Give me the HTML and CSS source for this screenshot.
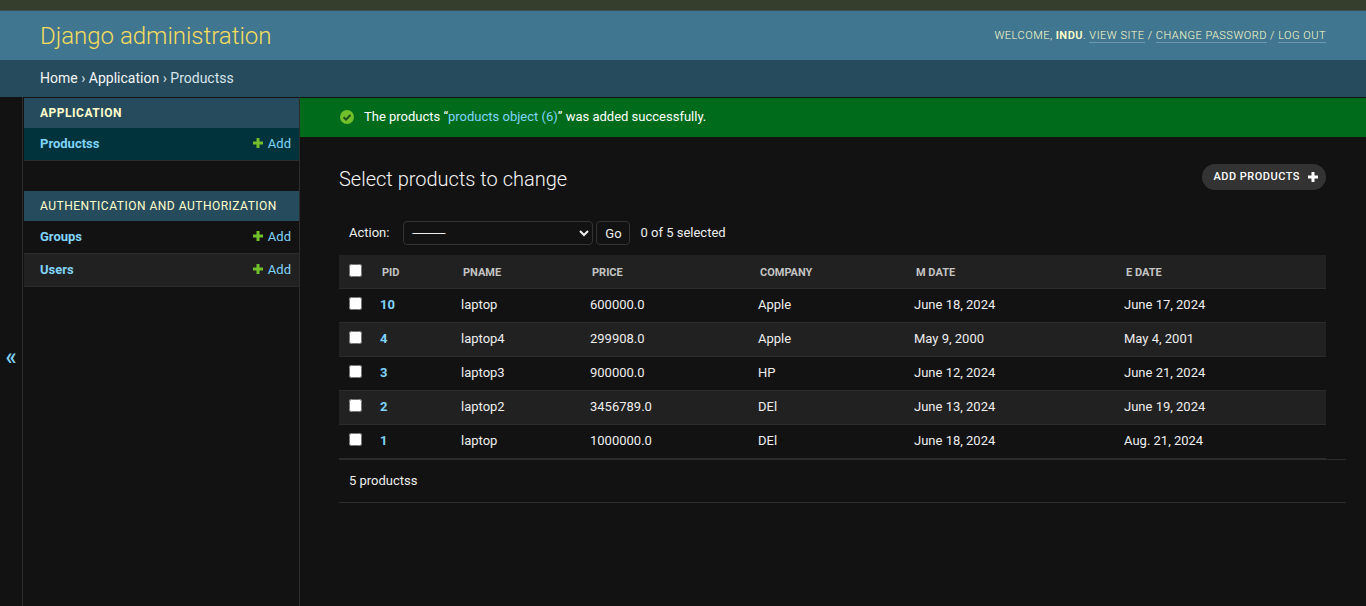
FILE: index.html
```html
<!DOCTYPE html>
<html>
<head>
	<title>Select products to change | Django site admin</title>
	<meta charset=utf-8>
	<link rel="stylesheet" href="styles.css">
</head>
<body>
	<div class="topband"></div>
	<header class="header">
		<div class="branding">Django administration</div>
		<div class="user-tools">
			Welcome, <strong>Indu</strong>. <a href="#">View site</a> / <a href="#">Change password</a> / <a href="#">Log out</a>
		</div>
	</header>
	<div class="breadcrumbs"><a href="#">Home</a> › <a href="#">Application</a> › Productss</div>

	<div class="main">
		<div class="toggle"><span class="toggle-mark">«</span></div>
		<nav class="sidebar">
			<div class="app">
				<div class="app-title">Application</div>
				<div class="model current">
					<a href="#" class="model-name">Productss</a>
					<a href="#" class="addlink"><svg width="12" height="12" viewBox="0 0 12 12"><path d="M4.5 1h3v3.5H11v3H7.5V11h-3V7.5H1v-3h3.5z" fill="#70bf2b"/></svg>Add</a>
				</div>
			</div>
			<div class="app">
				<div class="app-title normal">Authentication and Authorization</div>
				<div class="model">
					<a href="#" class="model-name">Groups</a>
					<a href="#" class="addlink"><svg width="12" height="12" viewBox="0 0 12 12"><path d="M4.5 1h3v3.5H11v3H7.5V11h-3V7.5H1v-3h3.5z" fill="#70bf2b"/></svg>Add</a>
				</div>
				<div class="model alt">
					<a href="#" class="model-name">Users</a>
					<a href="#" class="addlink"><svg width="12" height="12" viewBox="0 0 12 12"><path d="M4.5 1h3v3.5H11v3H7.5V11h-3V7.5H1v-3h3.5z" fill="#70bf2b"/></svg>Add</a>
				</div>
			</div>
		</nav>

		<div class="content-wrap">
			<div class="message">
				<svg width="14" height="14" viewBox="0 0 14 14"><circle cx="7" cy="7" r="7" fill="#70bf2b"/><path d="M3.6 7.2l2.4 2.4 4.4-4.6" fill="none" stroke="#1a4d1f" stroke-width="2"/></svg>
				<span>The products “<a href="#">products object (6)</a>” was added successfully.</span>
			</div>
			<div class="content">
				<div class="title-row">
					<h1>Select products to change</h1>
					<a href="#" class="addbutton">Add products<svg width="12" height="12" viewBox="0 0 12 12"><path d="M4.5 1h3v3.5H11v3H7.5V11h-3V7.5H1v-3h3.5z" fill="#fff"/></svg></a>
				</div>
				<div class="actions">
					<label>Action:</label>
					<select class="action-select"><option>————</option></select>
					<button class="go">Go</button>
					<span class="counter">0 of 5 selected</span>
				</div>
				<table class="results">
					<thead>
						<tr>
							<th class="check"><input type="checkbox"></th>
							<th>PID</th>
							<th>PNAME</th>
							<th>PRICE</th>
							<th>COMPANY</th>
							<th>M DATE</th>
							<th>E DATE</th>
						</tr>
					</thead>
					<tbody>
						<tr>
							<td class="check"><input type="checkbox"></td>
							<td><a href="#">10</a></td><td>laptop</td><td>600000.0</td><td>Apple</td><td>June 18, 2024</td><td>June 17, 2024</td>
						</tr>
						<tr>
							<td class="check"><input type="checkbox"></td>
							<td><a href="#">4</a></td><td>laptop4</td><td>299908.0</td><td>Apple</td><td>May 9, 2000</td><td>May 4, 2001</td>
						</tr>
						<tr>
							<td class="check"><input type="checkbox"></td>
							<td><a href="#">3</a></td><td>laptop3</td><td>900000.0</td><td>HP</td><td>June 12, 2024</td><td>June 21, 2024</td>
						</tr>
						<tr>
							<td class="check"><input type="checkbox"></td>
							<td><a href="#">2</a></td><td>laptop2</td><td>3456789.0</td><td>DEl</td><td>June 13, 2024</td><td>June 19, 2024</td>
						</tr>
						<tr>
							<td class="check"><input type="checkbox"></td>
							<td><a href="#">1</a></td><td>laptop</td><td>1000000.0</td><td>DEl</td><td>June 18, 2024</td><td>Aug. 21, 2024</td>
						</tr>
					</tbody>
				</table>
				<div class="paginator">5 productss</div>
			</div>
		</div>
	</div>
</body>
</html>
```

FILE: styles.css
```css
html, body {
	height: 100%;
}
body {
	margin: 0;
	background: #121212;
	color: #eeeeee;
	font-family: Roboto, "Liberation Sans", sans-serif;
	font-size: 14px;
	display: flex;
	flex-direction: column;
	overflow: hidden;
}
a {
	color: #81d4fa;
	text-decoration: none;
}
.topband {
	height: 10px;
	background: #353d2d;
	border-bottom: 1px solid #3f5050;
}
.header {
	height: 49px;
	background: #417690;
	color: #ffc;
	padding: 0 40px;
	display: flex;
	justify-content: space-between;
	align-items: center;
}
.branding {
	font-size: 24px;
	font-weight: 300;
	color: #f5dd5d;
}
.user-tools {
	font-size: 11px;
	font-weight: 300;
	letter-spacing: .5px;
	text-transform: uppercase;
}
.user-tools strong {
	font-weight: 600;
}
.user-tools a {
	color: #ffc;
	border-bottom: 1px solid rgba(255, 255, 255, .25);
}
.breadcrumbs {
	height: 37px;
	box-sizing: border-box;
	background: #264b5d;
	color: #d6e4ec;
	padding: 10px 40px;
	line-height: 16px;
}
.breadcrumbs a {
	color: #f5f5f5;
}
.main {
	flex: 1;
	display: flex;
	min-height: 0;
}
.toggle {
	width: 22px;
	flex: none;
	border-right: 1px solid #2c2c2c;
	display: flex;
	align-items: center;
	justify-content: center;
	padding-top: 12px;
	box-sizing: content-box;
}
.toggle-mark {
	color: #81d4fa;
	font-size: 23px;
	line-height: 20px;
	font-weight: 500;
}
.sidebar {
	width: 275px;
	flex: none;
	margin-left: 1px;
	border-right: 1px solid #2c2c2c;
}
.app {
	margin-bottom: 30px;
}
.app-title {
	height: 30px;
	margin-top: 1px;
	box-sizing: border-box;
	background: #264b5d;
	color: #ffc;
	padding: 8px 16px 0;
	font-size: 12px;
	font-weight: 700;
	line-height: 15px;
	letter-spacing: .5px;
	text-transform: uppercase;
	white-space: nowrap;
}
.app-title.normal {
	font-weight: 400;
	margin-top: 0;
}
.model {
	height: 33px;
	box-sizing: border-box;
	border-bottom: 1px solid #2c2c2c;
	padding: 0 8px 2px 16px;
	display: flex;
	justify-content: space-between;
	align-items: center;
	font-size: 13px;
}
.model.current {
	background: #00333b;
}
.model.alt {
	background: #212121;
}
.model-name {
	font-weight: 700;
}
.addlink {
	display: flex;
	align-items: center;
	gap: 4px;
}
.content-wrap {
	flex: 1;
	min-width: 0;
}
.message {
	height: 39px;
	margin-top: 1px;
	box-sizing: border-box;
	background: #006b1b;
	color: #fff;
	padding: 0 40px 2px;
	display: flex;
	align-items: center;
	gap: 10px;
	font-size: 13px;
}
.content {
	padding: 27px 40px 0 39px;
}
.title-row {
	display: flex;
	justify-content: space-between;
	align-items: center;
	height: 30px;
}
h1 {
	margin: 0;
	font-size: 20px;
	font-weight: 300;
	color: #f5f5f5;
}
.addbutton {
	background: #333;
	color: #fff;
	border-radius: 15px;
	height: 26px;
	box-sizing: border-box;
	margin-bottom: 4px;
	padding: 0 7px 2px 11.5px;
	display: flex;
	align-items: center;
	gap: 7px;
	font-size: 11px;
	font-weight: 500;
	letter-spacing: .5px;
	text-transform: uppercase;
}
.addbutton svg {
	margin-top: 2px;
}
.actions {
	display: flex;
	align-items: center;
	margin-top: 27px;
	height: 24px;
	padding-left: 10px;
	font-size: 13px;
	margin-bottom: 10px;
}
.actions label, .counter {
	margin-bottom: 2px;
}
.action-select {
	width: 190px;
	height: 24px;
	margin-left: 14px;
	background: #121212;
	color: #eee;
	border: 1px solid #333;
	border-radius: 4px;
	font-family: inherit;
	font-size: 13px;
	letter-spacing: -2px;
	padding: 0 3px;
}
.go {
	height: 24px;
	width: 34px;
	margin-left: 3px;
	background: #121212;
	color: #eee;
	border: 1px solid #333;
	border-radius: 4px;
	font-family: inherit;
	font-size: 13px;
	padding: 0;
}
.counter {
	margin-left: 10px;
}
.results {
	width: 987px;
	border-collapse: collapse;
	table-layout: fixed;
	font-size: 13px;
}
.results th {
	background: #212121;
	height: 33px;
	box-sizing: border-box;
	padding: 2px 0 0 2px;
	text-align: left;
	font-size: 11px;
	font-weight: 700;
	color: #c4c4c4;
	border-bottom: 1px solid #2c2c2c;
}
.results td {
	height: 34px;
	box-sizing: border-box;
	padding: 8px 0 0;
	line-height: 16px;
	vertical-align: top;
	border-bottom: 1px solid #2c2c2c;
}
.results tbody tr:nth-child(even) {
	background: #212121;
}
.results td a {
	font-weight: 700;
}
.results th.check {
	padding: 9px 0 0 10px;
	vertical-align: top;
}
.results td.check {
	padding: 8px 0 0 10px;
}
.results input {
	margin: 0;
	width: 13px;
	height: 13px;
	display: block;
}
.results th:nth-child(1) { width: 41px; }
.results th:nth-child(2) { width: 81px; }
.results th:nth-child(3) { width: 129px; }
.results th:nth-child(4) { width: 168px; }
.results th:nth-child(5) { width: 156px; }
.results th:nth-child(6) { width: 210px; }
.paginator {
	margin-right: -20px;
	height: 44px;
	box-sizing: border-box;
	border-top: 1px solid #2c2c2c;
	border-bottom: 1px solid #2c2c2c;
	padding-left: 10px;
	display: flex;
	align-items: center;
	font-size: 13px;
}
```
